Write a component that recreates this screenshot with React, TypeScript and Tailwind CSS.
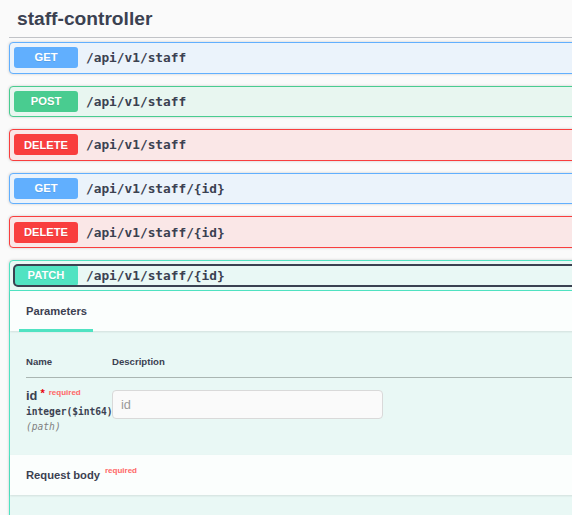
const sans = { fontFamily: '"Liberation Sans", Arial, sans-serif' };
const mono = { fontFamily: '"DejaVu Sans Mono", monospace' };

type Op = { method: string; path: string; badge: string; border: string; bg: string };

const ops: Op[] = [
  { method: "GET", path: "/api/v1/staff", badge: "bg-[#61affe]", border: "border-[#61affe]", bg: "bg-[#ebf3fb]" },
  { method: "POST", path: "/api/v1/staff", badge: "bg-[#49cc90]", border: "border-[#49cc90]", bg: "bg-[#e8f6f0]" },
  { method: "DELETE", path: "/api/v1/staff", badge: "bg-[#f93e3e]", border: "border-[#f93e3e]", bg: "bg-[#fae7e7]" },
  { method: "GET", path: "/api/v1/staff/{id}", badge: "bg-[#61affe]", border: "border-[#61affe]", bg: "bg-[#ebf3fb]" },
  { method: "DELETE", path: "/api/v1/staff/{id}", badge: "bg-[#f93e3e]", border: "border-[#f93e3e]", bg: "bg-[#fae7e7]" },
];

const Badge = ({ method, color }: { method: string; color: string }) => (
  <span
    className={`${color} w-[64px] h-[21px] shrink-0 rounded-[3px] flex items-center justify-center text-white font-bold text-[11.2px] [text-shadow:0_1px_0_rgba(0,0,0,0.1)]`}
  >
    {method}
  </span>
);

const PathText = ({ path }: { path: string }) => (
  <span className="pl-[8px] text-[12.8px] font-bold text-[#3b4151]" style={mono}>
    {path}
  </span>
);

export default function App() {
  return (
    <div className="w-[572px] h-[515px] overflow-hidden bg-[#fafafa] text-[#3b4151]" style={sans}>
      <div className="pl-[9px] w-[660px]">
        <h3 className="pl-[8px] pr-[16px] py-[8px] leading-[21px] text-[19.2px] font-bold border-b border-[#c1c3c7] mb-[4px]">
          staff-controller
        </h3>

        {ops.map((op, i) => (
          <div
            key={i}
            className={`h-[31.6px] mb-[12px] rounded-[4px] border ${op.border} ${op.bg} p-[4px] flex items-center shadow-[0_0_3px_rgba(0,0,0,0.19)]`}
          >
            <Badge method={op.method} color={op.badge} />
            <PathText path={op.path} />
          </div>
        ))}

        <div className="rounded-[4px] border border-[#50e3c2] bg-[#e9f8f5] shadow-[0_0_3px_rgba(0,0,0,0.19)]">
          <div className="p-[4px] border-b border-[#50e3c2]">
            <div className="flex items-center rounded-[4px] outline-2 outline-[#3b4151] outline-offset-[-1px]">
              <Badge method="PATCH" color="bg-[#50e3c2]" />
              <PathText path="/api/v1/staff/{id}" />
            </div>
          </div>

          <div className="h-[40px] px-[16px] flex items-center bg-white/80 shadow-[0_1px_2px_rgba(0,0,0,0.1)]">
            <span className="relative text-[11.2px] font-bold">
              Parameters
              <span className="absolute left-[-7px] right-[-6px] bottom-[-13px] h-[3px] bg-[#50e3c2]" />
            </span>
          </div>

          <div className="h-[124px] pt-[17px] px-[16px]">
            <div className="h-[30px] flex items-center border-b border-[#aab6b2] text-[9.6px] font-bold">
              <span className="w-[86px]">Name</span>
              <span>Description</span>
            </div>
            <div className="flex pt-[9px]">
              <div className="w-[86px] shrink-0">
                <div className="h-[17px] leading-[17px] text-[12.8px] font-bold whitespace-nowrap">
                  id
                  <span className="text-red-600 text-[11px] relative top-[-3px]">&nbsp;*</span>
                  <span className="text-[8px] text-[#ff6666] relative top-[-5px] pl-[4px] font-bold">required</span>
                </div>
                <div className="leading-[15px] text-[9.6px] font-bold whitespace-nowrap" style={mono}>
                  integer($int64)
                </div>
                <div className="leading-[15px] text-[9.6px] italic text-[#808080]" style={mono}>
                  (path)
                </div>
              </div>
              <input
                placeholder="id"
                className="mt-[3px] w-[271px] h-[29px] px-[8px] rounded-[4px] border border-[#d9d9d9] bg-[#fafafa] text-[12.8px] placeholder:text-[#9a9a9a] outline-none"
                style={sans}
              />
            </div>
          </div>

          <div className="h-[40px] px-[16px] flex items-center bg-white/80 shadow-[0_1px_2px_rgba(0,0,0,0.1)]">
            <span className="text-[11.2px] font-bold">Request body</span>
            <span className="text-[8px] font-bold text-[#ff6666] relative top-[-4px] pl-[5px]">required</span>
          </div>

          <div className="h-[40px]" />
        </div>
      </div>
    </div>
  );
}
